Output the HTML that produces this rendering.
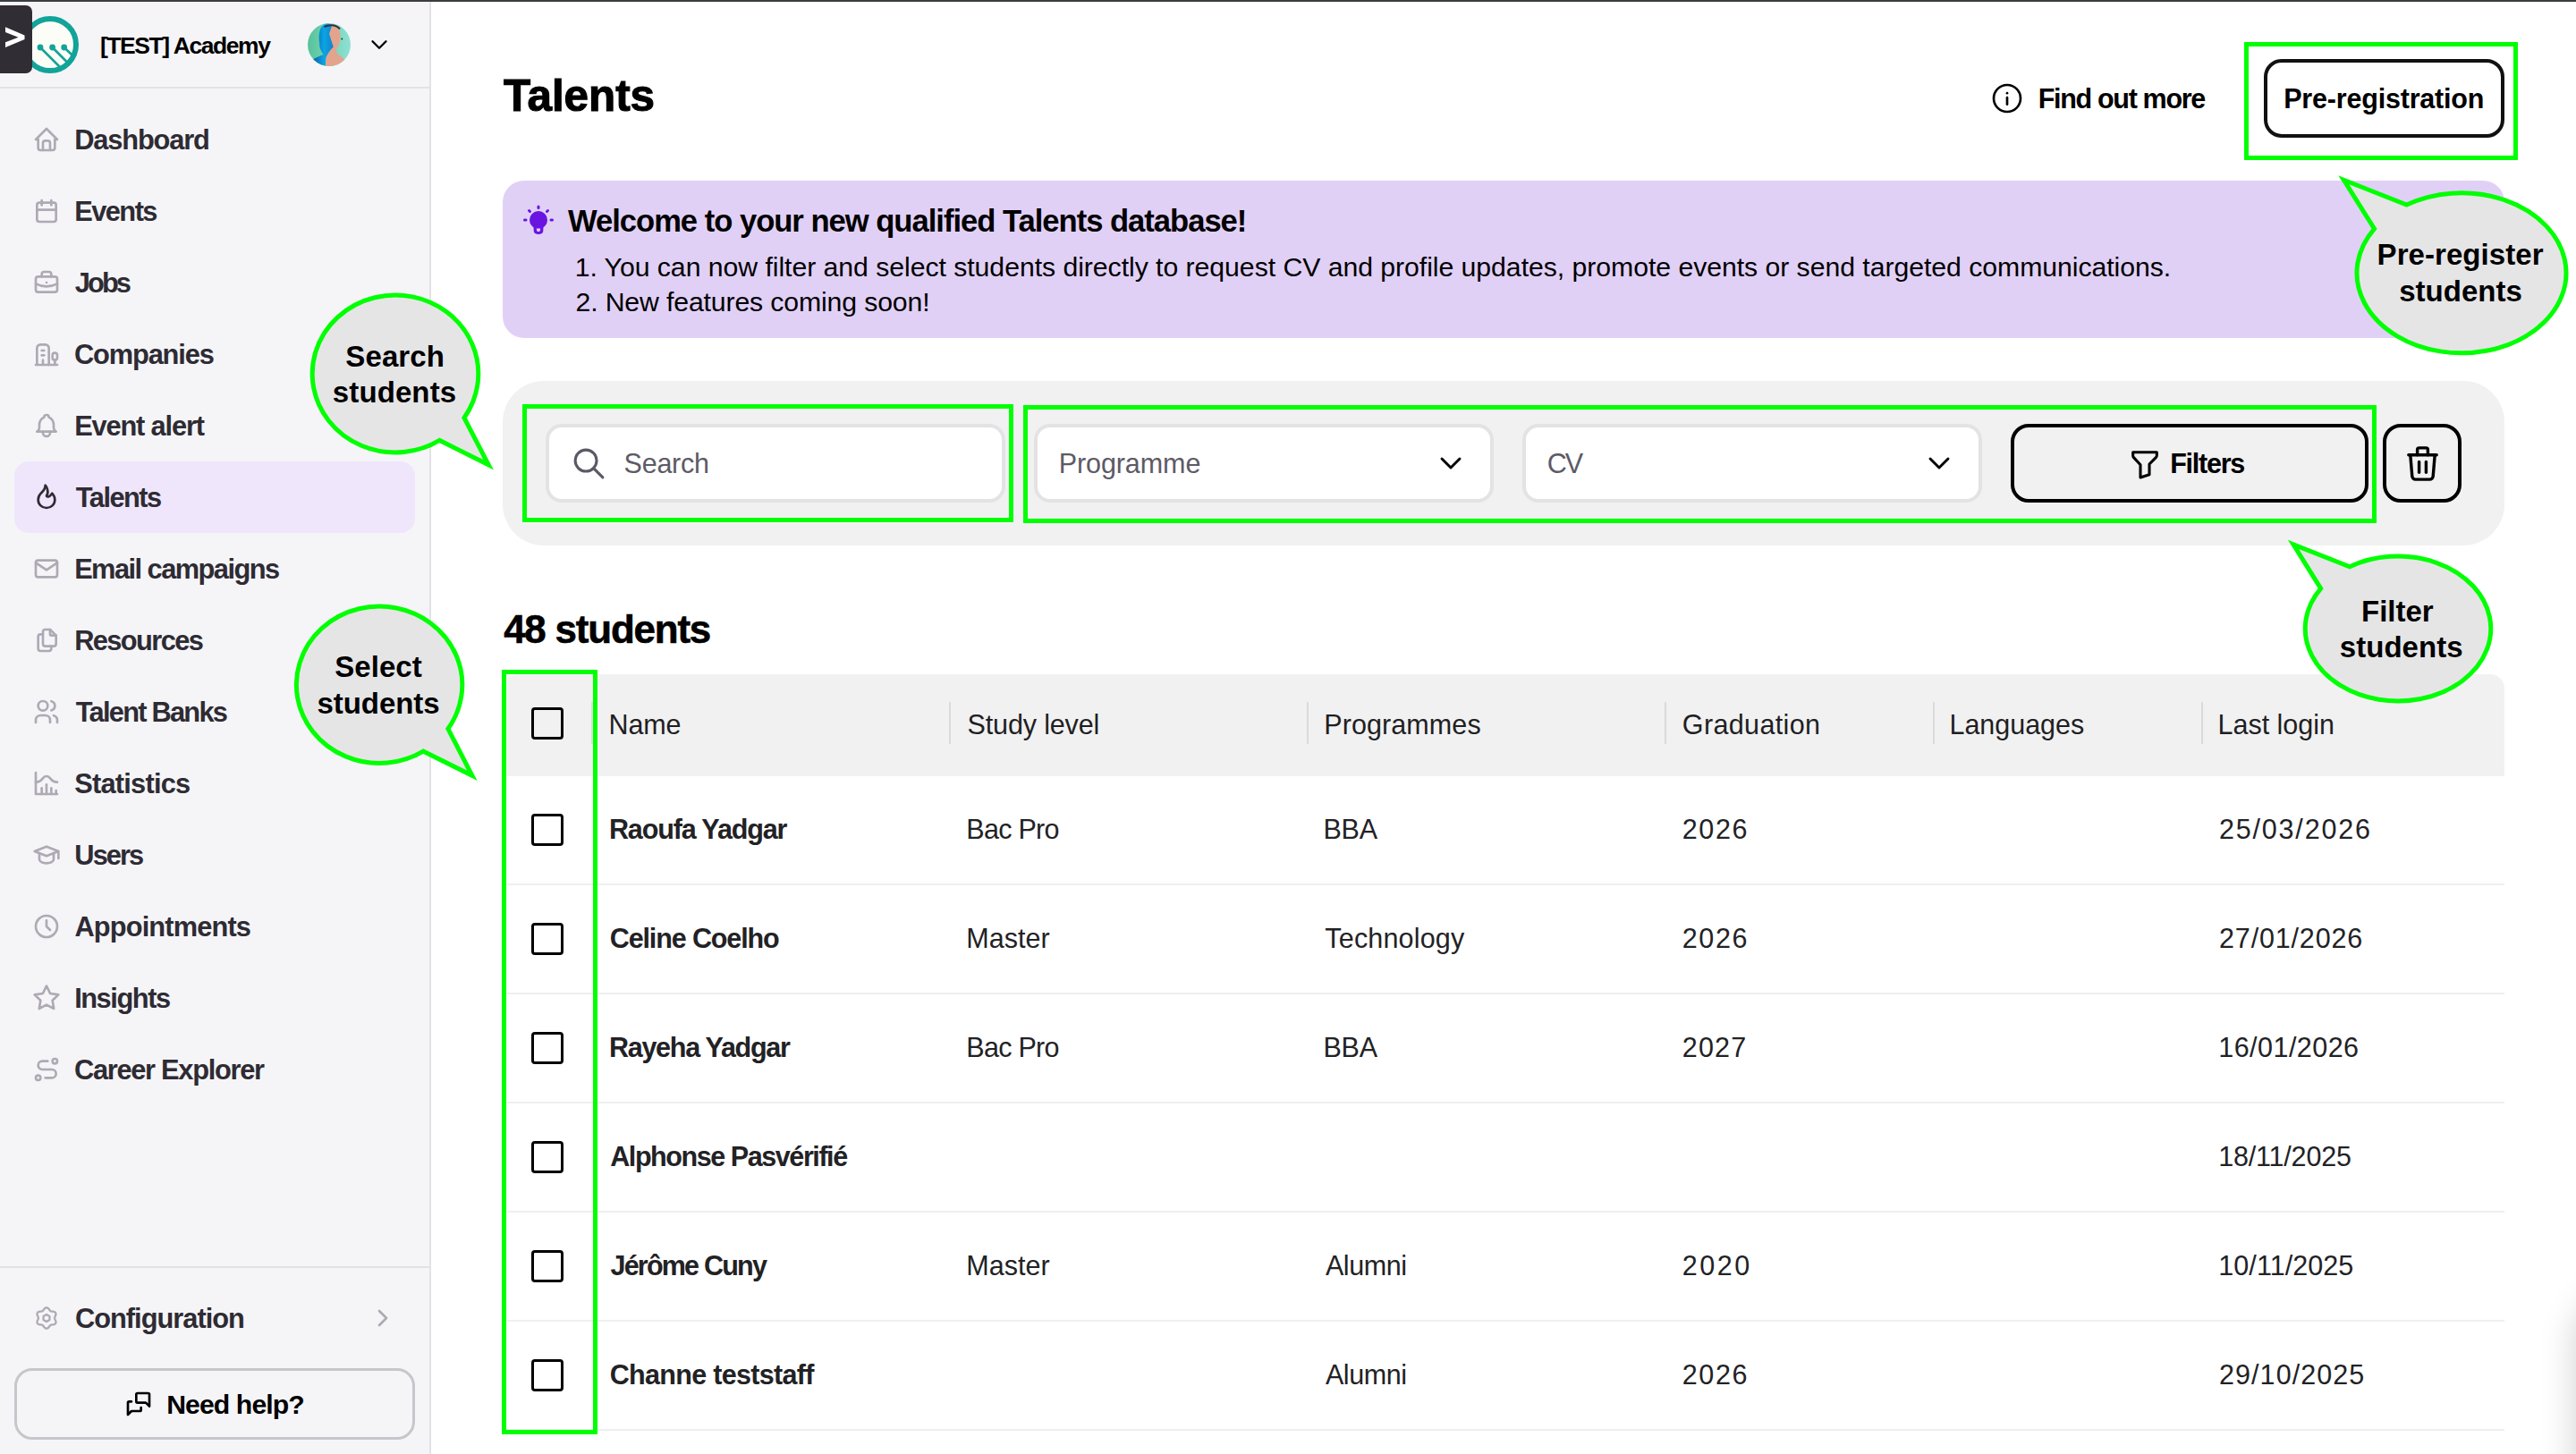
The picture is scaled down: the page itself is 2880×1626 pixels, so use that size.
<!DOCTYPE html>
<html><head><meta charset="utf-8"><style>
html,body{margin:0;padding:0;width:2880px;height:1626px;overflow:hidden;background:#fff}
.t{position:absolute;white-space:nowrap;font-family:'Liberation Sans', sans-serif}
.b{position:absolute;display:block}
</style></head><body>
<div class="b" style="left:0px;top:0px;width:481px;height:1626px;background:#f5f5f8"></div>
<div class="b" style="left:480px;top:0px;width:2px;height:1626px;background:#e3e2e7"></div>
<div class="b" style="left:0px;top:0px;width:2880px;height:2px;background:#3b3e40"></div>
<div class="b" style="left:0px;top:97px;width:480px;height:2px;background:#e2e1e6"></div>
<svg class="b" style="left:20px;top:14px;" width="72" height="72" viewBox="0 0 72 72"><circle cx="36" cy="36" r="29" fill="#fdfdf7" stroke="#12a399" stroke-width="6"/><g stroke="#12a399" stroke-width="2.6" stroke-linecap="round"><line x1="25" y1="39" x2="46" y2="60"/><line x1="38.6" y1="39" x2="54" y2="54.5"/><line x1="51.7" y1="39" x2="59.5" y2="46.5"/></g><g fill="#12a399"><circle cx="25" cy="39" r="3.4"/><circle cx="38.6" cy="39" r="3.4"/><circle cx="51.7" cy="39" r="3.4"/></g></svg>
<div class="b" style="left:-8px;top:6px;width:44px;height:76px;background:#302d35;border-radius:7px"></div>
<svg class="b" style="left:0px;top:26px;" width="36" height="32" viewBox="0 0 36 32"><path d="M6 4.3 L27.5 13.6 L27.5 18 L6 27 L6 21.3 L20.5 15.8 L6 10 Z" fill="#fff"/></svg>
<div class="t" style="left:111.91px;top:37.61px;font-size:26.45px;line-height:26.45px;letter-spacing:-1.392px;font-weight:bold;color:#000;">[TEST] Academy</div>
<svg class="b" style="left:344px;top:26px;" width="48" height="48" viewBox="0 0 48 48"><defs><linearGradient id="av" x1="0" y1="0" x2="1" y2="0"><stop offset="0" stop-color="#55c39c"/><stop offset="0.35" stop-color="#6dcfac"/><stop offset="1" stop-color="#8fe1d3"/></linearGradient><linearGradient id="avb" x1="0" y1="0" x2="1" y2="0"><stop offset="0" stop-color="#0b4f95"/><stop offset="0.6" stop-color="#0aa5e6"/><stop offset="1" stop-color="#1a7ec8"/></linearGradient><clipPath id="avc"><circle cx="24" cy="24" r="24"/></clipPath></defs><g clip-path="url(#avc)"><rect width="48" height="48" fill="url(#av)"/><path d="M26.4 3 C32 2 36 5 36.4 12 L36.4 16 C36 22 35 25 32.2 28 L32.2 33 C35 36 39 38 42 41 L46 48 L19.8 48 L20.2 38.7 C23 33 25 30 28.7 26.4 L24 11.7 Z" fill="#e2a48c"/><path d="M17.5 2 C20 0 25 0 27 3 L24 11.7 L28.7 26.4 C25 30 22 34 20.2 38.7 L19.8 48 L4 48 L3 42 C9 38 15 36 17.5 34.9 C14 30 13 26 13.3 23.3 C12.5 18 12.5 14 12.9 11.7 C13.5 7 15 4 17.5 2 Z" fill="url(#avb)"/><path d="M18.5 4 C24 1 32 1.5 36 6.5" stroke="#2a3444" stroke-width="2" fill="none"/><circle cx="38.3" cy="17.5" r="0.9" fill="#222"/></g></svg>
<svg class="b" style="left:409.00px;top:35.00px" width="30" height="30" viewBox="0 0 24 24"><g fill="none" stroke="#000" stroke-width="1.9" stroke-linecap="round" stroke-linejoin="round"><path d="M6 9l6 6l6 -6"/></g></svg>
<div class="b" style="left:16px;top:516px;width:448px;height:80px;background:#efe6fc;border-radius:16px"></div>
<div class="t" style="left:83.14px;top:141.93px;font-size:30.80px;line-height:30.80px;letter-spacing:-1.138px;font-weight:bold;color:#2e2b33;">Dashboard</div>
<svg class="b" style="left:36.00px;top:140.00px" width="32" height="32" viewBox="0 0 24 24"><g fill="none" stroke="#aeaab4" stroke-width="2" stroke-linecap="round" stroke-linejoin="round"><path d="M5 12l-2 0l9 -9l9 9l-2 0"/><path d="M5 12v7a2 2 0 0 0 2 2h10a2 2 0 0 0 2 -2v-7"/><path d="M9 21v-6a2 2 0 0 1 2 -2h2a2 2 0 0 1 2 2v6"/></g></svg>
<div class="t" style="left:83.14px;top:221.93px;font-size:30.80px;line-height:30.80px;letter-spacing:-1.526px;font-weight:bold;color:#2e2b33;">Events</div>
<svg class="b" style="left:36.00px;top:220.00px" width="32" height="32" viewBox="0 0 24 24"><g fill="none" stroke="#aeaab4" stroke-width="2" stroke-linecap="round" stroke-linejoin="round"><path d="M4 7a2 2 0 0 1 2 -2h12a2 2 0 0 1 2 2v12a2 2 0 0 1 -2 2h-12a2 2 0 0 1 -2 -2v-12z"/><path d="M16 3v4"/><path d="M8 3v4"/><path d="M4 11h16"/></g></svg>
<div class="t" style="left:83.73px;top:301.93px;font-size:30.80px;line-height:30.80px;letter-spacing:-2.876px;font-weight:bold;color:#2e2b33;">Jobs</div>
<svg class="b" style="left:36.00px;top:300.00px" width="32" height="32" viewBox="0 0 24 24"><g fill="none" stroke="#aeaab4" stroke-width="2" stroke-linecap="round" stroke-linejoin="round"><path d="M3 9a2 2 0 0 1 2 -2h14a2 2 0 0 1 2 2v9a2 2 0 0 1 -2 2h-14a2 2 0 0 1 -2 -2v-9z"/><path d="M8 7v-2a2 2 0 0 1 2 -2h4a2 2 0 0 1 2 2v2"/><path d="M3 13a20 20 0 0 0 18 0"/><path d="M12 12l0 .01"/></g></svg>
<div class="t" style="left:82.94px;top:381.93px;font-size:30.80px;line-height:30.80px;letter-spacing:-1.140px;font-weight:bold;color:#2e2b33;">Companies</div>
<svg class="b" style="left:36.00px;top:380.00px" width="32" height="32" viewBox="0 0 24 24"><g fill="none" stroke="#aeaab4" stroke-width="2" stroke-linecap="round" stroke-linejoin="round"><path d="M3 21h18"/><path d="M19 21v-4"/><path d="M19 17a2 2 0 0 0 2 -2v-2a2 2 0 1 0 -4 0v2a2 2 0 0 0 2 2z"/><path d="M14 21v-14a3 3 0 0 0 -3 -3h-4a3 3 0 0 0 -3 3v14"/><path d="M9 17v4"/><path d="M8 13h2"/><path d="M8 9h2"/></g></svg>
<div class="t" style="left:83.14px;top:461.93px;font-size:30.80px;line-height:30.80px;letter-spacing:-1.158px;font-weight:bold;color:#2e2b33;">Event alert</div>
<svg class="b" style="left:36.00px;top:460.00px" width="32" height="32" viewBox="0 0 24 24"><g fill="none" stroke="#aeaab4" stroke-width="2" stroke-linecap="round" stroke-linejoin="round"><path d="M10 5a2 2 0 1 1 4 0a7 7 0 0 1 4 6v3a4 4 0 0 0 2 3h-16a4 4 0 0 0 2 -3v-3a7 7 0 0 1 4 -6"/><path d="M9 17v1a3 3 0 0 0 6 0v-1"/></g></svg>
<div class="t" style="left:84.85px;top:541.93px;font-size:30.80px;line-height:30.80px;letter-spacing:-1.543px;font-weight:bold;color:#2e2b33;">Talents</div>
<svg class="b" style="left:36.00px;top:540.00px" width="32" height="32" viewBox="0 0 24 24"><g fill="none" stroke="#2e2b33" stroke-width="2" stroke-linecap="round" stroke-linejoin="round"><path d="M12 10.941c2.333 -3.308 .167 -7.823 -1 -8.941c0 3.395 -2.235 5.299 -3.667 6.706c-1.43 1.408 -2.333 3.621 -2.333 5.588c0 3.704 3.134 6.706 7 6.706s7 -3.002 7 -6.706c0 -1.712 -1.232 -4.403 -2.333 -5.588c-2.084 3.353 -3.257 3.353 -4.667 2.235"/></g></svg>
<div class="t" style="left:83.14px;top:621.93px;font-size:30.80px;line-height:30.80px;letter-spacing:-1.549px;font-weight:bold;color:#2e2b33;">Email campaigns</div>
<svg class="b" style="left:36.00px;top:620.00px" width="32" height="32" viewBox="0 0 24 24"><g fill="none" stroke="#aeaab4" stroke-width="2" stroke-linecap="round" stroke-linejoin="round"><path d="M3 7a2 2 0 0 1 2 -2h14a2 2 0 0 1 2 2v10a2 2 0 0 1 -2 2h-14a2 2 0 0 1 -2 -2v-10z"/><path d="M3 7l9 6l9 -6"/></g></svg>
<div class="t" style="left:83.14px;top:701.93px;font-size:30.80px;line-height:30.80px;letter-spacing:-1.595px;font-weight:bold;color:#2e2b33;">Resources</div>
<svg class="b" style="left:36.00px;top:700.00px" width="32" height="32" viewBox="0 0 24 24"><g fill="none" stroke="#aeaab4" stroke-width="2" stroke-linecap="round" stroke-linejoin="round"><path d="M15 3v4a1 1 0 0 0 1 1h4"/><path d="M18 17h-7a2 2 0 0 1 -2 -2v-10a2 2 0 0 1 2 -2h4l5 5v7a2 2 0 0 1 -2 2z"/><path d="M16 17v2a2 2 0 0 1 -2 2h-7a2 2 0 0 1 -2 -2v-10a2 2 0 0 1 2 -2h2"/></g></svg>
<div class="t" style="left:84.85px;top:781.93px;font-size:30.80px;line-height:30.80px;letter-spacing:-1.759px;font-weight:bold;color:#2e2b33;">Talent Banks</div>
<svg class="b" style="left:36.00px;top:780.00px" width="32" height="32" viewBox="0 0 24 24"><g fill="none" stroke="#aeaab4" stroke-width="2" stroke-linecap="round" stroke-linejoin="round"><path d="M9 7m-4 0a4 4 0 1 0 8 0a4 4 0 1 0 -8 0"/><path d="M3 21v-2a4 4 0 0 1 4 -4h4a4 4 0 0 1 4 4v2"/><path d="M16 3.13a4 4 0 0 1 0 7.75"/><path d="M21 21v-2a4 4 0 0 0 -3 -3.85"/></g></svg>
<div class="t" style="left:83.31px;top:861.93px;font-size:30.80px;line-height:30.80px;letter-spacing:-0.784px;font-weight:bold;color:#2e2b33;">Statistics</div>
<svg class="b" style="left:36.00px;top:860.00px" width="32" height="32" viewBox="0 0 24 24"><g fill="none" stroke="#aeaab4" stroke-width="2" stroke-linecap="round" stroke-linejoin="round"><path d="M3 3v18h18"/><path d="M20 18v3"/><path d="M16 16v5"/><path d="M12 13v8"/><path d="M8 16v5"/><path d="M3 11c6 0 5 -5 9 -5s3 5 9 5"/></g></svg>
<div class="t" style="left:83.35px;top:941.93px;font-size:30.80px;line-height:30.80px;letter-spacing:-1.929px;font-weight:bold;color:#2e2b33;">Users</div>
<svg class="b" style="left:36.00px;top:940.00px" width="32" height="32" viewBox="0 0 24 24"><g fill="none" stroke="#aeaab4" stroke-width="2" stroke-linecap="round" stroke-linejoin="round"><path d="M22 9l-10 -4l-10 4l10 4l10 -4v6"/><path d="M6 10.6v5.4a6 3 0 0 0 12 0v-5.4"/></g></svg>
<div class="t" style="left:83.43px;top:1021.93px;font-size:30.80px;line-height:30.80px;letter-spacing:-0.861px;font-weight:bold;color:#2e2b33;">Appointments</div>
<svg class="b" style="left:36.00px;top:1020.00px" width="32" height="32" viewBox="0 0 24 24"><g fill="none" stroke="#aeaab4" stroke-width="2" stroke-linecap="round" stroke-linejoin="round"><path d="M3 12a9 9 0 1 0 18 0a9 9 0 0 0 -18 0"/><path d="M12 7v5l3 3"/></g></svg>
<div class="t" style="left:83.14px;top:1101.93px;font-size:30.80px;line-height:30.80px;letter-spacing:-1.438px;font-weight:bold;color:#2e2b33;">Insights</div>
<svg class="b" style="left:36.00px;top:1100.00px" width="32" height="32" viewBox="0 0 24 24"><g fill="none" stroke="#aeaab4" stroke-width="2" stroke-linecap="round" stroke-linejoin="round"><path d="M12 17.75l-6.172 3.245l1.179 -6.873l-5 -4.867l6.9 -1l3.086 -6.253l3.086 6.253l6.9 1l-5 4.867l1.179 6.873z"/></g></svg>
<div class="t" style="left:82.94px;top:1181.93px;font-size:30.80px;line-height:30.80px;letter-spacing:-1.287px;font-weight:bold;color:#2e2b33;">Career Explorer</div>
<svg class="b" style="left:36.00px;top:1180.00px" width="32" height="32" viewBox="0 0 24 24"><g fill="none" stroke="#aeaab4" stroke-width="2" stroke-linecap="round" stroke-linejoin="round"><path d="M3 19a2 2 0 1 0 4 0a2 2 0 0 0 -4 0"/><path d="M19 7a2 2 0 1 0 0 -4a2 2 0 0 0 0 4z"/><path d="M11 19h5.5a3.5 3.5 0 0 0 0 -7h-8a3.5 3.5 0 0 1 0 -7h4.5"/></g></svg>
<div class="b" style="left:0px;top:1416px;width:480px;height:2px;background:#e2e1e6"></div>
<div class="t" style="left:83.94px;top:1459.93px;font-size:30.80px;line-height:30.80px;letter-spacing:-0.992px;font-weight:bold;color:#2e2b33;">Configuration</div>
<svg class="b" style="left:36.00px;top:1458.00px" width="32" height="32" viewBox="0 0 24 24"><g fill="none" stroke="#aeaab4" stroke-width="1.7" stroke-linecap="round" stroke-linejoin="round"><path d="M18.80 12.00 L18.84 12.36 L18.95 12.73 L19.12 13.13 L19.33 13.56 L19.53 14.02 L19.71 14.51 L19.83 15.01 L19.86 15.50 L19.80 15.97 L19.62 16.40 L19.34 16.77 L18.96 17.06 L18.52 17.28 L18.03 17.43 L17.52 17.52 L17.01 17.57 L16.54 17.60 L16.11 17.66 L15.73 17.74 L15.40 17.89 L15.11 18.10 L14.84 18.39 L14.58 18.73 L14.31 19.12 L14.02 19.53 L13.69 19.93 L13.31 20.28 L12.90 20.56 L12.46 20.74 L12.00 20.80 L11.54 20.74 L11.10 20.56 L10.69 20.28 L10.31 19.93 L9.98 19.53 L9.69 19.12 L9.42 18.73 L9.16 18.39 L8.89 18.10 L8.60 17.89 L8.27 17.74 L7.89 17.66 L7.46 17.60 L6.99 17.57 L6.48 17.52 L5.97 17.43 L5.48 17.28 L5.04 17.06 L4.66 16.77 L4.38 16.40 L4.20 15.97 L4.14 15.50 L4.17 15.01 L4.29 14.51 L4.47 14.02 L4.67 13.56 L4.88 13.13 L5.05 12.73 L5.16 12.36 L5.20 12.00 L5.16 11.64 L5.05 11.27 L4.88 10.87 L4.67 10.44 L4.47 9.98 L4.29 9.49 L4.17 8.99 L4.14 8.50 L4.20 8.03 L4.38 7.60 L4.66 7.23 L5.04 6.94 L5.48 6.72 L5.97 6.57 L6.48 6.48 L6.99 6.43 L7.46 6.40 L7.89 6.34 L8.27 6.26 L8.60 6.11 L8.89 5.90 L9.16 5.61 L9.42 5.27 L9.69 4.88 L9.98 4.47 L10.31 4.07 L10.69 3.72 L11.10 3.44 L11.54 3.26 L12.00 3.20 L12.46 3.26 L12.90 3.44 L13.31 3.72 L13.69 4.07 L14.02 4.47 L14.31 4.88 L14.58 5.27 L14.84 5.61 L15.11 5.90 L15.40 6.11 L15.73 6.26 L16.11 6.34 L16.54 6.40 L17.01 6.43 L17.52 6.48 L18.03 6.57 L18.52 6.72 L18.96 6.94 L19.34 7.23 L19.62 7.60 L19.80 8.03 L19.86 8.50 L19.83 8.99 L19.71 9.49 L19.53 9.98 L19.33 10.44 L19.12 10.87 L18.95 11.27 L18.84 11.64 L18.80 12.00z"/><path d="M12.00 9.00 L14.60 10.50 L14.60 13.50 L12.00 15.00 L9.40 13.50 L9.40 10.50z"/></g></svg>
<svg class="b" style="left:412.00px;top:1458.00px" width="32" height="32" viewBox="0 0 24 24"><g fill="none" stroke="#aeaab4" stroke-width="2" stroke-linecap="round" stroke-linejoin="round"><path d="M9 6l6 6l-6 6"/></g></svg>
<div class="b" style="left:16px;top:1530px;width:448px;height:80px;border:3px solid #c8c6cc;border-radius:20px;box-sizing:border-box"></div>
<svg class="b" style="left:139.00px;top:1554.00px" width="32" height="32" viewBox="0 0 24 24"><g fill="none" stroke="#000" stroke-width="2" stroke-linecap="round" stroke-linejoin="round"><path d="M21 14l-3 -3h-7a1 1 0 0 1 -1 -1v-6a1 1 0 0 1 1 -1h9a1 1 0 0 1 1 1v10"/><path d="M14 15v2a1 1 0 0 1 -1 1h-7l-3 3v-10a1 1 0 0 1 1 -1h2"/></g></svg>
<div class="t" style="left:186.18px;top:1556.01px;font-size:30.23px;line-height:30.23px;letter-spacing:-0.921px;font-weight:bold;color:#000;">Need help?</div>
<div class="t" style="left:563.05px;top:81.57px;font-size:49.42px;line-height:49.42px;letter-spacing:-0.052px;font-weight:bold;color:#000;-webkit-text-stroke:1.1px #000">Talents</div>
<svg class="b" style="left:2224.00px;top:90.00px" width="40" height="40" viewBox="0 0 24 24"><g fill="none" stroke="#000" stroke-width="1.6" stroke-linecap="round" stroke-linejoin="round"><path d="M3 12a9 9 0 1 0 18 0a9 9 0 0 0 -18 0"/><path d="M12 8.5h.01"/><path d="M12 11.5v4.5"/></g></svg>
<div class="t" style="left:2278.76px;top:94.96px;font-size:30.52px;line-height:30.52px;letter-spacing:-1.326px;font-weight:bold;color:#000;">Find out more</div>
<div class="b" style="left:2531px;top:66px;width:269px;height:88px;border:4px solid #111;border-radius:20px;box-sizing:border-box;background:#fff"></div>
<div class="t" style="left:2553.16px;top:94.96px;font-size:30.52px;line-height:30.52px;letter-spacing:-0.195px;font-weight:bold;color:#000;">Pre-registration</div>
<div class="b" style="left:2509px;top:47px;width:306px;height:132px;border:5px solid #00ff00;box-sizing:border-box"></div>
<div class="b" style="left:562px;top:202px;width:2238px;height:176px;background:#e1d0f6;border-radius:24px"></div>
<svg class="b" style="left:580px;top:226px;" width="44" height="40" viewBox="0 0 44 40"><g fill="#6a14e2"><circle cx="22" cy="20" r="10"/><path d="M16.3 25 L27.7 25 L27.2 33 C26.8 37 17.2 37 16.8 33 Z"/></g><path d="M19.8 29.6 L24.2 29.6 L23.8 32 C23.4 33.3 20.6 33.3 20.2 32 Z" fill="#e1d0f6"/><g stroke="#6a14e2" stroke-width="3" stroke-linecap="round"><line x1="22" y1="5" x2="22" y2="6.5"/><line x1="11.5" y1="9.5" x2="12.5" y2="10.5"/><line x1="32.5" y1="9.5" x2="31.5" y2="10.5"/><line x1="6.5" y1="20" x2="8" y2="20"/><line x1="36" y1="20" x2="37.5" y2="20"/></g></svg>
<div class="t" style="left:634.97px;top:229.92px;font-size:34.59px;line-height:34.59px;letter-spacing:-1.007px;font-weight:bold;color:#000;">Welcome to your new qualified Talents database!</div>
<div class="t" style="left:642.70px;top:283.61px;font-size:30.23px;line-height:30.23px;letter-spacing:-0.046px;font-weight:normal;color:#000;">1. You can now filter and select students directly to request CV and profile updates, promote events or send targeted communications.</div>
<div class="t" style="left:643.48px;top:323.21px;font-size:30.23px;line-height:30.23px;letter-spacing:-0.136px;font-weight:normal;color:#000;">2. New features coming soon!</div>
<div class="b" style="left:562px;top:426px;width:2238px;height:184px;background:#f1f1f2;border-radius:46px"></div>
<div class="b" style="left:610px;top:474px;width:514px;height:88px;background:#fff;border:4px solid #e3e3e6;border-radius:18px;box-sizing:border-box"></div>
<div class="b" style="left:1156px;top:474px;width:514px;height:88px;background:#fff;border:4px solid #e3e3e6;border-radius:18px;box-sizing:border-box"></div>
<div class="b" style="left:1702px;top:474px;width:514px;height:88px;background:#fff;border:4px solid #e3e3e6;border-radius:18px;box-sizing:border-box"></div>
<svg class="b" style="left:637.50px;top:497.50px" width="41" height="41" viewBox="0 0 24 24"><g fill="none" stroke="#5b5866" stroke-width="1.8" stroke-linecap="round" stroke-linejoin="round"><path d="M10 10m-7 0a7 7 0 1 0 14 0a7 7 0 1 0 -14 0"/><path d="M21 21l-6 -6"/></g></svg>
<div class="t" style="left:697.61px;top:503.16px;font-size:30.52px;line-height:30.52px;letter-spacing:-0.279px;font-weight:normal;color:#5d5a66;">Search</div>
<div class="t" style="left:1183.70px;top:503.16px;font-size:30.52px;line-height:30.52px;letter-spacing:-0.087px;font-weight:normal;color:#5d5a66;">Programme</div>
<div class="t" style="left:1729.65px;top:503.16px;font-size:30.52px;line-height:30.52px;letter-spacing:-1.928px;font-weight:normal;color:#5d5a66;">CV</div>
<svg class="b" style="left:1602.00px;top:497.50px" width="40" height="40" viewBox="0 0 24 24"><g fill="none" stroke="#000" stroke-width="1.75" stroke-linecap="round" stroke-linejoin="round"><path d="M6 9l6 6l6 -6"/></g></svg>
<svg class="b" style="left:2148.00px;top:497.50px" width="40" height="40" viewBox="0 0 24 24"><g fill="none" stroke="#000" stroke-width="1.75" stroke-linecap="round" stroke-linejoin="round"><path d="M6 9l6 6l6 -6"/></g></svg>
<div class="b" style="left:2248px;top:474px;width:400px;height:88px;border:4px solid #000;border-radius:20px;box-sizing:border-box"></div>
<svg class="b" style="left:2377.70px;top:498.50px" width="40" height="40" viewBox="0 0 24 24"><g fill="none" stroke="#000" stroke-width="1.85" stroke-linecap="round" stroke-linejoin="round"><path d="M4 4h16v2.172a2 2 0 0 1 -.586 1.414l-4.414 4.414v7l-6 2v-8.5l-4.48 -4.928a2 2 0 0 1 -.52 -1.345v-2.227z"/></g></svg>
<div class="t" style="left:2426.16px;top:502.76px;font-size:30.52px;line-height:30.52px;letter-spacing:-1.244px;font-weight:bold;color:#000;">Filters</div>
<div class="b" style="left:2664px;top:474px;width:88px;height:88px;border:4px solid #000;border-radius:20px;box-sizing:border-box"></div>
<svg class="b" style="left:2684.50px;top:494.50px" width="47" height="47" viewBox="0 0 24 24"><g fill="none" stroke="#000" stroke-width="1.75" stroke-linecap="round" stroke-linejoin="round"><path d="M4 7l16 0"/><path d="M10 11l0 6"/><path d="M14 11l0 6"/><path d="M5 7l1 12a2 2 0 0 0 2 2h8a2 2 0 0 0 2 -2l1 -12"/><path d="M9 7v-3a1 1 0 0 1 1 -1h4a1 1 0 0 1 1 1v3"/></g></svg>
<div class="b" style="left:584px;top:452px;width:549px;height:132px;border:5px solid #00ff00;box-sizing:border-box"></div>
<div class="b" style="left:1144px;top:453px;width:1513px;height:132px;border:5px solid #00ff00;box-sizing:border-box"></div>
<div class="t" style="left:563.14px;top:681.64px;font-size:43.90px;line-height:43.90px;letter-spacing:-1.179px;font-weight:bold;color:#000;-webkit-text-stroke:0.6px #000">48 students</div>
<div class="b" style="left:562px;top:754px;width:2238px;height:114px;background:#f1f1f2;border-radius:16px 16px 0 0"></div>
<div class="b" style="left:661px;top:785px;width:2px;height:47px;background:#dadadd"></div>
<div class="b" style="left:1061px;top:785px;width:2px;height:47px;background:#dadadd"></div>
<div class="b" style="left:1461px;top:785px;width:2px;height:47px;background:#dadadd"></div>
<div class="b" style="left:1861px;top:785px;width:2px;height:47px;background:#dadadd"></div>
<div class="b" style="left:2161px;top:785px;width:2px;height:47px;background:#dadadd"></div>
<div class="b" style="left:2461px;top:785px;width:2px;height:47px;background:#dadadd"></div>
<div class="b" style="left:594px;top:791px;width:36px;height:36px;border:3.4px solid #000;border-radius:4px;box-sizing:border-box"></div>
<div class="t" style="left:680.50px;top:795.16px;font-size:30.52px;line-height:30.52px;letter-spacing:-0.117px;font-weight:normal;color:#1f1f22;">Name</div>
<div class="t" style="left:1081.61px;top:795.16px;font-size:30.52px;line-height:30.52px;letter-spacing:-0.162px;font-weight:normal;color:#1f1f22;">Study level</div>
<div class="t" style="left:1480.30px;top:795.16px;font-size:30.52px;line-height:30.52px;letter-spacing:0.077px;font-weight:normal;color:#1f1f22;">Programmes</div>
<div class="t" style="left:1880.86px;top:795.16px;font-size:30.52px;line-height:30.52px;letter-spacing:0.342px;font-weight:normal;color:#1f1f22;">Graduation</div>
<div class="t" style="left:2179.50px;top:795.16px;font-size:30.52px;line-height:30.52px;letter-spacing:-0.037px;font-weight:normal;color:#1f1f22;">Languages</div>
<div class="t" style="left:2479.50px;top:795.16px;font-size:30.52px;line-height:30.52px;letter-spacing:-0.020px;font-weight:normal;color:#1f1f22;">Last login</div>
<div class="b" style="left:562px;top:988px;width:2238px;height:2px;background:#efeff1"></div>
<div class="b" style="left:594px;top:910px;width:36px;height:36px;border:3.4px solid #000;border-radius:4px;box-sizing:border-box"></div>
<div class="t" style="left:680.96px;top:912.36px;font-size:30.52px;line-height:30.52px;letter-spacing:-1.135px;font-weight:bold;color:#222225;">Raoufa Yadgar</div>
<div class="t" style="left:1080.30px;top:912.36px;font-size:30.52px;line-height:30.52px;letter-spacing:-0.720px;font-weight:normal;color:#222225;">Bac Pro</div>
<div class="t" style="left:1479.50px;top:912.36px;font-size:30.52px;line-height:30.52px;letter-spacing:-0.281px;font-weight:normal;color:#222225;">BBA</div>
<div class="t" style="left:1880.66px;top:912.36px;font-size:30.52px;line-height:30.52px;letter-spacing:1.641px;font-weight:normal;color:#222225;">2026</div>
<div class="t" style="left:2481.06px;top:912.36px;font-size:30.52px;line-height:30.52px;letter-spacing:1.790px;font-weight:normal;color:#222225;">25/03/2026</div>
<div class="b" style="left:562px;top:1110px;width:2238px;height:2px;background:#efeff1"></div>
<div class="b" style="left:594px;top:1032px;width:36px;height:36px;border:3.4px solid #000;border-radius:4px;box-sizing:border-box"></div>
<div class="t" style="left:681.75px;top:1034.36px;font-size:30.52px;line-height:30.52px;letter-spacing:-1.124px;font-weight:bold;color:#222225;">Celine Coelho</div>
<div class="t" style="left:1080.30px;top:1034.36px;font-size:30.52px;line-height:30.52px;letter-spacing:0.039px;font-weight:normal;color:#222225;">Master</div>
<div class="t" style="left:1481.31px;top:1034.36px;font-size:30.52px;line-height:30.52px;letter-spacing:0.177px;font-weight:normal;color:#222225;">Technology</div>
<div class="t" style="left:1880.66px;top:1034.36px;font-size:30.52px;line-height:30.52px;letter-spacing:1.641px;font-weight:normal;color:#222225;">2026</div>
<div class="t" style="left:2481.06px;top:1034.36px;font-size:30.52px;line-height:30.52px;letter-spacing:0.831px;font-weight:normal;color:#222225;">27/01/2026</div>
<div class="b" style="left:562px;top:1232px;width:2238px;height:2px;background:#efeff1"></div>
<div class="b" style="left:594px;top:1154px;width:36px;height:36px;border:3.4px solid #000;border-radius:4px;box-sizing:border-box"></div>
<div class="t" style="left:680.96px;top:1156.36px;font-size:30.52px;line-height:30.52px;letter-spacing:-1.275px;font-weight:bold;color:#222225;">Rayeha Yadgar</div>
<div class="t" style="left:1080.30px;top:1156.36px;font-size:30.52px;line-height:30.52px;letter-spacing:-0.720px;font-weight:normal;color:#222225;">Bac Pro</div>
<div class="t" style="left:1479.50px;top:1156.36px;font-size:30.52px;line-height:30.52px;letter-spacing:-0.281px;font-weight:normal;color:#222225;">BBA</div>
<div class="t" style="left:1880.66px;top:1156.36px;font-size:30.52px;line-height:30.52px;letter-spacing:1.249px;font-weight:normal;color:#222225;">2027</div>
<div class="t" style="left:2480.27px;top:1156.36px;font-size:30.52px;line-height:30.52px;letter-spacing:0.451px;font-weight:normal;color:#222225;">16/01/2026</div>
<div class="b" style="left:562px;top:1354px;width:2238px;height:2px;background:#efeff1"></div>
<div class="b" style="left:594px;top:1276px;width:36px;height:36px;border:3.4px solid #000;border-radius:4px;box-sizing:border-box"></div>
<div class="t" style="left:682.24px;top:1278.36px;font-size:30.52px;line-height:30.52px;letter-spacing:-1.434px;font-weight:bold;color:#222225;">Alphonse Pasvérifié</div>
<div class="t" style="left:2480.27px;top:1278.36px;font-size:30.52px;line-height:30.52px;letter-spacing:-0.203px;font-weight:normal;color:#222225;">18/11/2025</div>
<div class="b" style="left:562px;top:1476px;width:2238px;height:2px;background:#efeff1"></div>
<div class="b" style="left:594px;top:1398px;width:36px;height:36px;border:3.4px solid #000;border-radius:4px;box-sizing:border-box"></div>
<div class="t" style="left:682.54px;top:1400.36px;font-size:30.52px;line-height:30.52px;letter-spacing:-1.801px;font-weight:bold;color:#222225;">Jérôme Cuny</div>
<div class="t" style="left:1080.30px;top:1400.36px;font-size:30.52px;line-height:30.52px;letter-spacing:0.039px;font-weight:normal;color:#222225;">Master</div>
<div class="t" style="left:1481.94px;top:1400.36px;font-size:30.52px;line-height:30.52px;letter-spacing:-0.436px;font-weight:normal;color:#222225;">Alumni</div>
<div class="t" style="left:1880.66px;top:1400.36px;font-size:30.52px;line-height:30.52px;letter-spacing:2.538px;font-weight:normal;color:#222225;">2020</div>
<div class="t" style="left:2480.27px;top:1400.36px;font-size:30.52px;line-height:30.52px;letter-spacing:0.066px;font-weight:normal;color:#222225;">10/11/2025</div>
<div class="b" style="left:562px;top:1598px;width:2238px;height:2px;background:#efeff1"></div>
<div class="b" style="left:594px;top:1520px;width:36px;height:36px;border:3.4px solid #000;border-radius:4px;box-sizing:border-box"></div>
<div class="t" style="left:681.75px;top:1522.36px;font-size:30.52px;line-height:30.52px;letter-spacing:-0.694px;font-weight:bold;color:#222225;">Channe teststaff</div>
<div class="t" style="left:1481.94px;top:1522.36px;font-size:30.52px;line-height:30.52px;letter-spacing:-0.436px;font-weight:normal;color:#222225;">Alumni</div>
<div class="t" style="left:1880.66px;top:1522.36px;font-size:30.52px;line-height:30.52px;letter-spacing:1.641px;font-weight:normal;color:#222225;">2026</div>
<div class="t" style="left:2481.06px;top:1522.36px;font-size:30.52px;line-height:30.52px;letter-spacing:1.047px;font-weight:normal;color:#222225;">29/10/2025</div>
<div class="b" style="left:561px;top:749px;width:107px;height:855px;border:5px solid #00ff00;box-sizing:border-box"></div>
<div class="b" style="left:2905px;top:1470px;width:-2605px;height:-1070px;"></div>
<div class="b" style="left:2886px;top:1455px;width:300px;height:400px;border-radius:44px;box-shadow:0 0 38px 8px rgba(0,0,0,0.17);background:#fff"></div>
<svg class="b" style="left:0;top:0" width="2880" height="1626" viewBox="0 0 2880 1626"><path d="M491.47 492.46 A92.80 88.00 0 1 1 518.94 467.20 L546.20 519.80 Z" fill="#e5e5e6" stroke="#00ff00" stroke-width="5" stroke-linejoin="miter" stroke-miterlimit="10"/><path d="M473.26 840.15 A92.70 87.70 0 1 1 500.89 814.93 L527.90 867.30 Z" fill="#e5e5e6" stroke="#00ff00" stroke-width="5" stroke-linejoin="miter" stroke-miterlimit="10"/><path d="M2690.64 229.10 A117.00 89.50 0 1 1 2654.52 255.81 L2620.40 201.30 Z" fill="#e5e5e6" stroke="#00ff00" stroke-width="5" stroke-linejoin="miter" stroke-miterlimit="10"/><path d="M2627.01 633.83 A103.75 81.00 0 1 1 2594.65 658.10 L2564.00 608.90 Z" fill="#e5e5e6" stroke="#00ff00" stroke-width="5" stroke-linejoin="miter" stroke-miterlimit="10"/></svg>
<div class="t" style="left:386.25px;top:382.07px;font-size:33.00px;line-height:33.00px;letter-spacing:0.133px;font-weight:bold;color:#000;">Search</div>
<div class="t" style="left:371.84px;top:422.07px;font-size:33.00px;line-height:33.00px;letter-spacing:0.106px;font-weight:bold;color:#000;">students</div>
<div class="t" style="left:374.25px;top:729.47px;font-size:33.00px;line-height:33.00px;letter-spacing:0.047px;font-weight:bold;color:#000;">Select</div>
<div class="t" style="left:354.44px;top:769.87px;font-size:33.00px;line-height:33.00px;letter-spacing:-0.045px;font-weight:bold;color:#000;">students</div>
<div class="t" style="left:2657.59px;top:268.47px;font-size:33.00px;line-height:33.00px;letter-spacing:0.060px;font-weight:bold;color:#000;">Pre-register</div>
<div class="t" style="left:2682.24px;top:308.67px;font-size:33.00px;line-height:33.00px;letter-spacing:0.000px;font-weight:bold;color:#000;">students</div>
<div class="t" style="left:2639.99px;top:667.47px;font-size:33.00px;line-height:33.00px;letter-spacing:0.006px;font-weight:bold;color:#000;">Filter</div>
<div class="t" style="left:2615.84px;top:706.67px;font-size:33.00px;line-height:33.00px;letter-spacing:0.030px;font-weight:bold;color:#000;">students</div>
</body></html>
